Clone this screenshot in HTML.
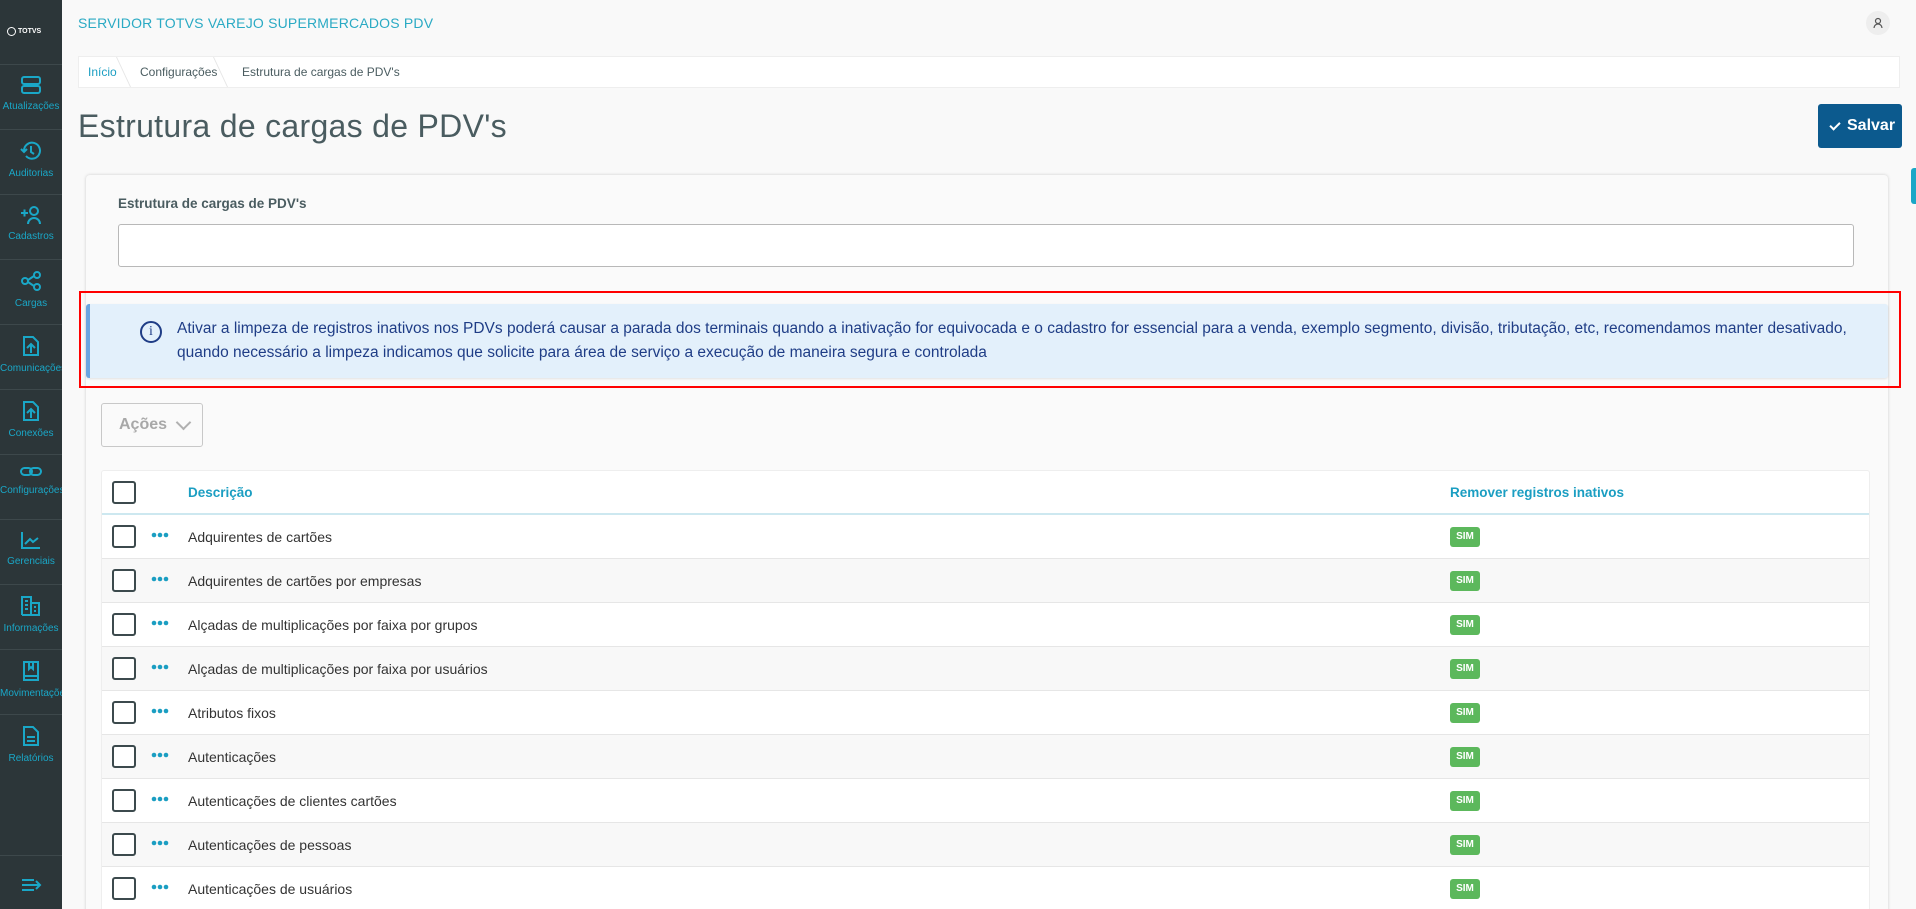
<!DOCTYPE html>
<html style="overflow:hidden;height:909px"><head><meta charset="utf-8"><style>
*{box-sizing:border-box;margin:0;padding:0}
body{width:1916px;height:909px;overflow:hidden;background:#f9f9f9;font-family:"Liberation Sans",sans-serif;position:relative}
.sb{position:absolute;left:0;top:0;width:62px;height:909px;background:#2c3639}
.sb .logo{position:absolute;left:7px;top:27px;color:#fff;font-size:7px;font-weight:bold;display:flex;align-items:center;gap:2px}
.sb .logo i{width:9px;height:9px;border:1.5px solid #fff;border-radius:50%;display:inline-block}
.it{position:absolute;left:0;width:62px;height:65px;border-top:1px solid #3d484b;text-align:center;color:#1aa7c7;font-size:10px;overflow:hidden;white-space:nowrap}
.it svg{display:block;margin:10px auto 6px}
.hdr{position:absolute;left:78px;top:15px;color:#2aaac4;font-size:14px;letter-spacing:.2px}
.av{position:absolute;left:1866px;top:11px;width:24px;height:24px;border-radius:50%;background:#eee}
.bc{position:absolute;left:78px;top:56px;width:1822px;height:32px;background:#fff;border:1px solid #eee;font-size:12px;color:#4a5c60;line-height:30px}
.bc span{position:absolute;top:0}
.bc .sep{width:12px;height:30px;border-right:1px solid #e6e6e6;transform:skewX(25deg)}
.title{position:absolute;left:78px;top:108px;font-size:32px;color:#4a5c60;font-weight:300;letter-spacing:.3px}
.save{position:absolute;left:1818px;top:104px;width:84px;height:44px;background:#0c5a8e;border-radius:3px;color:#fff;font-weight:bold;font-size:16px;line-height:44px;padding-left:29px}
.save:before{content:"";position:absolute;left:12px;top:18px;width:8px;height:4px;border-left:2px solid #fff;border-bottom:2px solid #fff;transform:rotate(-45deg)}
.tab{position:absolute;left:1911px;top:168px;width:5px;height:36px;background:#1aa7c7;border-radius:3px 0 0 3px}
.card{position:absolute;left:86px;top:175px;width:1802px;height:740px;background:#fafafa;border-radius:4px;box-shadow:0 0 3px rgba(0,0,0,.18)}
.lbl{position:absolute;left:118px;top:196px;font-size:13.5px;font-weight:bold;color:#4a5c60}
.inp{position:absolute;left:118px;top:224px;width:1736px;height:43px;background:#fff;border:1px solid #b8b8b8;border-radius:3px}
.alert{position:absolute;left:86px;top:304px;width:1802px;height:74px;background:#e3f0fb;border-left:4px solid #6aa5e0;border-radius:3px;box-shadow:0 1px 2px rgba(0,0,0,.1);color:#1f3d86;font-size:15.5px;line-height:24px;padding:13px 0 0 87px;white-space:nowrap}
.ic{position:absolute;left:50px;top:17px;width:22px;height:22px;border:2px solid #1f3d86;border-radius:50%;font-size:14px;line-height:18px;text-align:center;font-family:"Liberation Serif",serif}
.red{position:absolute;left:79px;top:291px;width:1822px;height:97px;border:2.5px solid #f00}
.acoes{position:absolute;left:101px;top:403px;width:102px;height:44px;border:1px solid #c8c8c8;border-radius:3px;color:#a8a8a8;font-weight:bold;font-size:16px;line-height:42px;padding-left:17px}
.acoes:after{content:"";position:absolute;left:76px;top:13px;width:9px;height:9px;border-right:2px solid #b0b0b0;border-bottom:2px solid #b0b0b0;transform:rotate(45deg)}
.tbl{position:absolute;left:101px;top:470px;width:1769px;height:450px;background:#fff;border:1px solid #eee;border-radius:3px}
.row{position:absolute;left:0;width:1767px;height:44px;border-bottom:1px solid #e6e6e6;font-size:14px;color:#333}
.row.g{background:#f8f8f8}
.row.h{height:44px;border-bottom:2px solid #cde8f0;color:#1b9ec2;font-weight:bold;font-size:13.5px}
.cb{position:absolute;left:10px;top:10px;width:24px;height:23px;border:2px solid #3c4a4d;border-radius:3px;background:#fff}
.dots{position:absolute;left:49px;top:17px}
.d{position:absolute;left:86px;top:14px}
.sim{position:absolute;left:1348px;top:12px;width:30px;height:20px;background:#5cb85c;border-radius:3px;color:#fff;font-size:10px;font-weight:bold;text-align:center;line-height:20px}
</style></head><body>
<div class="sb">
<div class="logo"><i></i>TOTVS</div>
<div class="it" style="top:64px"><svg width="22" height="20" viewBox="0 0 22 20"><rect x="2" y="2" width="18" height="7" rx="2" fill="none" stroke="#1aa7c7" stroke-width="2"/><rect x="2" y="11" width="18" height="7" rx="2" fill="none" stroke="#1aa7c7" stroke-width="2"/></svg>Atualizações</div>
<div class="it" style="top:129px"><svg width="22" height="22" viewBox="0 0 22 22"><path d="M4 11a8 8 0 1 1 2 5M1 9l3 3 3-3M11 6v6l3 2" fill="none" stroke="#1aa7c7" stroke-width="2"/></svg>Auditorias</div>
<div class="it" style="top:194px"><svg width="22" height="20" viewBox="0 0 22 20"><path d="M1 8h7M4.5 4.5v7" stroke="#1aa7c7" stroke-width="2"/><circle cx="14" cy="6" r="4" fill="none" stroke="#1aa7c7" stroke-width="2"/><path d="M8 19a6 6 0 0 1 12 0" fill="none" stroke="#1aa7c7" stroke-width="2"/></svg>Cadastros</div>
<div class="it" style="top:259px"><svg width="22" height="22" viewBox="0 0 22 22"><circle cx="5" cy="11" r="3" fill="none" stroke="#1aa7c7" stroke-width="2"/><circle cx="17" cy="5" r="3" fill="none" stroke="#1aa7c7" stroke-width="2"/><circle cx="17" cy="17" r="3" fill="none" stroke="#1aa7c7" stroke-width="2"/><path d="M8 10l6-4M8 12l6 4" stroke="#1aa7c7" stroke-width="2"/></svg>Cargas</div>
<div class="it" style="top:324px"><svg width="18" height="22" viewBox="0 0 18 22"><path d="M2 2h9l5 5v13H2z M9 18V10M5 13l4-4 4 4" fill="none" stroke="#1aa7c7" stroke-width="2"/></svg>Comunicações</div>
<div class="it" style="top:389px"><svg width="18" height="22" viewBox="0 0 18 22"><path d="M2 2h9l5 5v13H2z M9 18V10M5 13l4-4 4 4" fill="none" stroke="#1aa7c7" stroke-width="2"/></svg>Conexões</div>
<div class="it" style="top:454px"><svg width="22" height="14" viewBox="0 0 22 14"><rect x="1" y="3" width="11" height="7" rx="3.5" fill="none" stroke="#1aa7c7" stroke-width="2"/><rect x="10" y="3" width="11" height="7" rx="3.5" fill="none" stroke="#1aa7c7" stroke-width="2"/></svg>Configurações</div>
<div class="it" style="top:519px"><svg width="22" height="20" viewBox="0 0 22 20"><path d="M2 2v16h18M5 14l5-5 3 3 5-4" fill="none" stroke="#1aa7c7" stroke-width="2"/></svg>Gerenciais</div>
<div class="it" style="top:584px"><svg width="22" height="22" viewBox="0 0 22 22"><path d="M2 20V2h9v18M11 8h8v12H2M5 6h3M5 10h3M5 14h3M14 12h2M14 16h2" fill="none" stroke="#1aa7c7" stroke-width="2"/></svg>Informações</div>
<div class="it" style="top:649px"><svg width="18" height="22" viewBox="0 0 18 22"><path d="M2 2h14v18H2zM2 16h14M7 2v7l2-2 2 2V2" fill="none" stroke="#1aa7c7" stroke-width="2"/></svg>Movimentações</div>
<div class="it" style="top:714px"><svg width="18" height="22" viewBox="0 0 18 22"><path d="M2 2h9l5 5v13H2zM5 12h8M5 16h8" fill="none" stroke="#1aa7c7" stroke-width="2"/></svg>Relatórios</div>
<div style="position:absolute;left:0;top:855px;width:62px;border-top:1px solid #3d484b"></div>
<svg style="position:absolute;left:21px;top:877px" width="22" height="16" viewBox="0 0 22 16"><path d="M1 3h12M1 8h17M1 13h12M15 4l4 4-4 4" fill="none" stroke="#1aa7c7" stroke-width="2"/></svg>
</div>
<div class="hdr">SERVIDOR TOTVS VAREJO SUPERMERCADOS PDV</div>
<div class="av"><svg width="24" height="24" viewBox="0 0 24 24"><circle cx="12" cy="10" r="2.5" fill="none" stroke="#555" stroke-width="1.2"/><path d="M8 17a4 4 0 0 1 8 0" fill="none" stroke="#555" stroke-width="1.2"/></svg></div>
<div class="bc"><span style="left:9px;color:#1b9ec2">Início</span><span class="sep" style="left:33px"></span><span style="left:61px">Configurações</span><span class="sep" style="left:130px"></span><span style="left:163px">Estrutura de cargas de PDV's</span></div>
<div class="title">Estrutura de cargas de PDV's</div>
<div class="save">Salvar</div>
<div class="tab"></div>
<div class="card"></div>
<div class="lbl">Estrutura de cargas de PDV's</div>
<div class="inp"></div>
<div class="alert"><div class="ic">i</div>Ativar a limpeza de registros inativos nos PDVs poderá causar a parada dos terminais quando a inativação for equivocada e o cadastro for essencial para a venda, exemplo segmento, divisão, tributação, etc, recomendamos manter desativado,<br>quando necessário a limpeza indicamos que solicite para área de serviço a execução de maneira segura e controlada</div>
<div class="red"></div>
<div class="acoes">Ações</div>
<div class="tbl">
<div class="row h" style="top:0"><div class="cb"></div><div class="d">Descrição</div><div class="d" style="left:1348px">Remover registros inativos</div></div>
<div class="row" style="top:44px"><div class="cb"></div><svg class="dots" width="18" height="6"><circle cx="3" cy="3" r="2.3" fill="#1b9ec2"/><circle cx="9" cy="3" r="2.3" fill="#1b9ec2"/><circle cx="15" cy="3" r="2.3" fill="#1b9ec2"/></svg><div class="d">Adquirentes de cartões</div><div class="sim">SIM</div></div>
<div class="row g" style="top:88px"><div class="cb"></div><svg class="dots" width="18" height="6"><circle cx="3" cy="3" r="2.3" fill="#1b9ec2"/><circle cx="9" cy="3" r="2.3" fill="#1b9ec2"/><circle cx="15" cy="3" r="2.3" fill="#1b9ec2"/></svg><div class="d">Adquirentes de cartões por empresas</div><div class="sim">SIM</div></div>
<div class="row" style="top:132px"><div class="cb"></div><svg class="dots" width="18" height="6"><circle cx="3" cy="3" r="2.3" fill="#1b9ec2"/><circle cx="9" cy="3" r="2.3" fill="#1b9ec2"/><circle cx="15" cy="3" r="2.3" fill="#1b9ec2"/></svg><div class="d">Alçadas de multiplicações por faixa por grupos</div><div class="sim">SIM</div></div>
<div class="row g" style="top:176px"><div class="cb"></div><svg class="dots" width="18" height="6"><circle cx="3" cy="3" r="2.3" fill="#1b9ec2"/><circle cx="9" cy="3" r="2.3" fill="#1b9ec2"/><circle cx="15" cy="3" r="2.3" fill="#1b9ec2"/></svg><div class="d">Alçadas de multiplicações por faixa por usuários</div><div class="sim">SIM</div></div>
<div class="row" style="top:220px"><div class="cb"></div><svg class="dots" width="18" height="6"><circle cx="3" cy="3" r="2.3" fill="#1b9ec2"/><circle cx="9" cy="3" r="2.3" fill="#1b9ec2"/><circle cx="15" cy="3" r="2.3" fill="#1b9ec2"/></svg><div class="d">Atributos fixos</div><div class="sim">SIM</div></div>
<div class="row g" style="top:264px"><div class="cb"></div><svg class="dots" width="18" height="6"><circle cx="3" cy="3" r="2.3" fill="#1b9ec2"/><circle cx="9" cy="3" r="2.3" fill="#1b9ec2"/><circle cx="15" cy="3" r="2.3" fill="#1b9ec2"/></svg><div class="d">Autenticações</div><div class="sim">SIM</div></div>
<div class="row" style="top:308px"><div class="cb"></div><svg class="dots" width="18" height="6"><circle cx="3" cy="3" r="2.3" fill="#1b9ec2"/><circle cx="9" cy="3" r="2.3" fill="#1b9ec2"/><circle cx="15" cy="3" r="2.3" fill="#1b9ec2"/></svg><div class="d">Autenticações de clientes cartões</div><div class="sim">SIM</div></div>
<div class="row g" style="top:352px"><div class="cb"></div><svg class="dots" width="18" height="6"><circle cx="3" cy="3" r="2.3" fill="#1b9ec2"/><circle cx="9" cy="3" r="2.3" fill="#1b9ec2"/><circle cx="15" cy="3" r="2.3" fill="#1b9ec2"/></svg><div class="d">Autenticações de pessoas</div><div class="sim">SIM</div></div>
<div class="row" style="top:396px"><div class="cb"></div><svg class="dots" width="18" height="6"><circle cx="3" cy="3" r="2.3" fill="#1b9ec2"/><circle cx="9" cy="3" r="2.3" fill="#1b9ec2"/><circle cx="15" cy="3" r="2.3" fill="#1b9ec2"/></svg><div class="d">Autenticações de usuários</div><div class="sim">SIM</div></div>
</div>
</body></html>
